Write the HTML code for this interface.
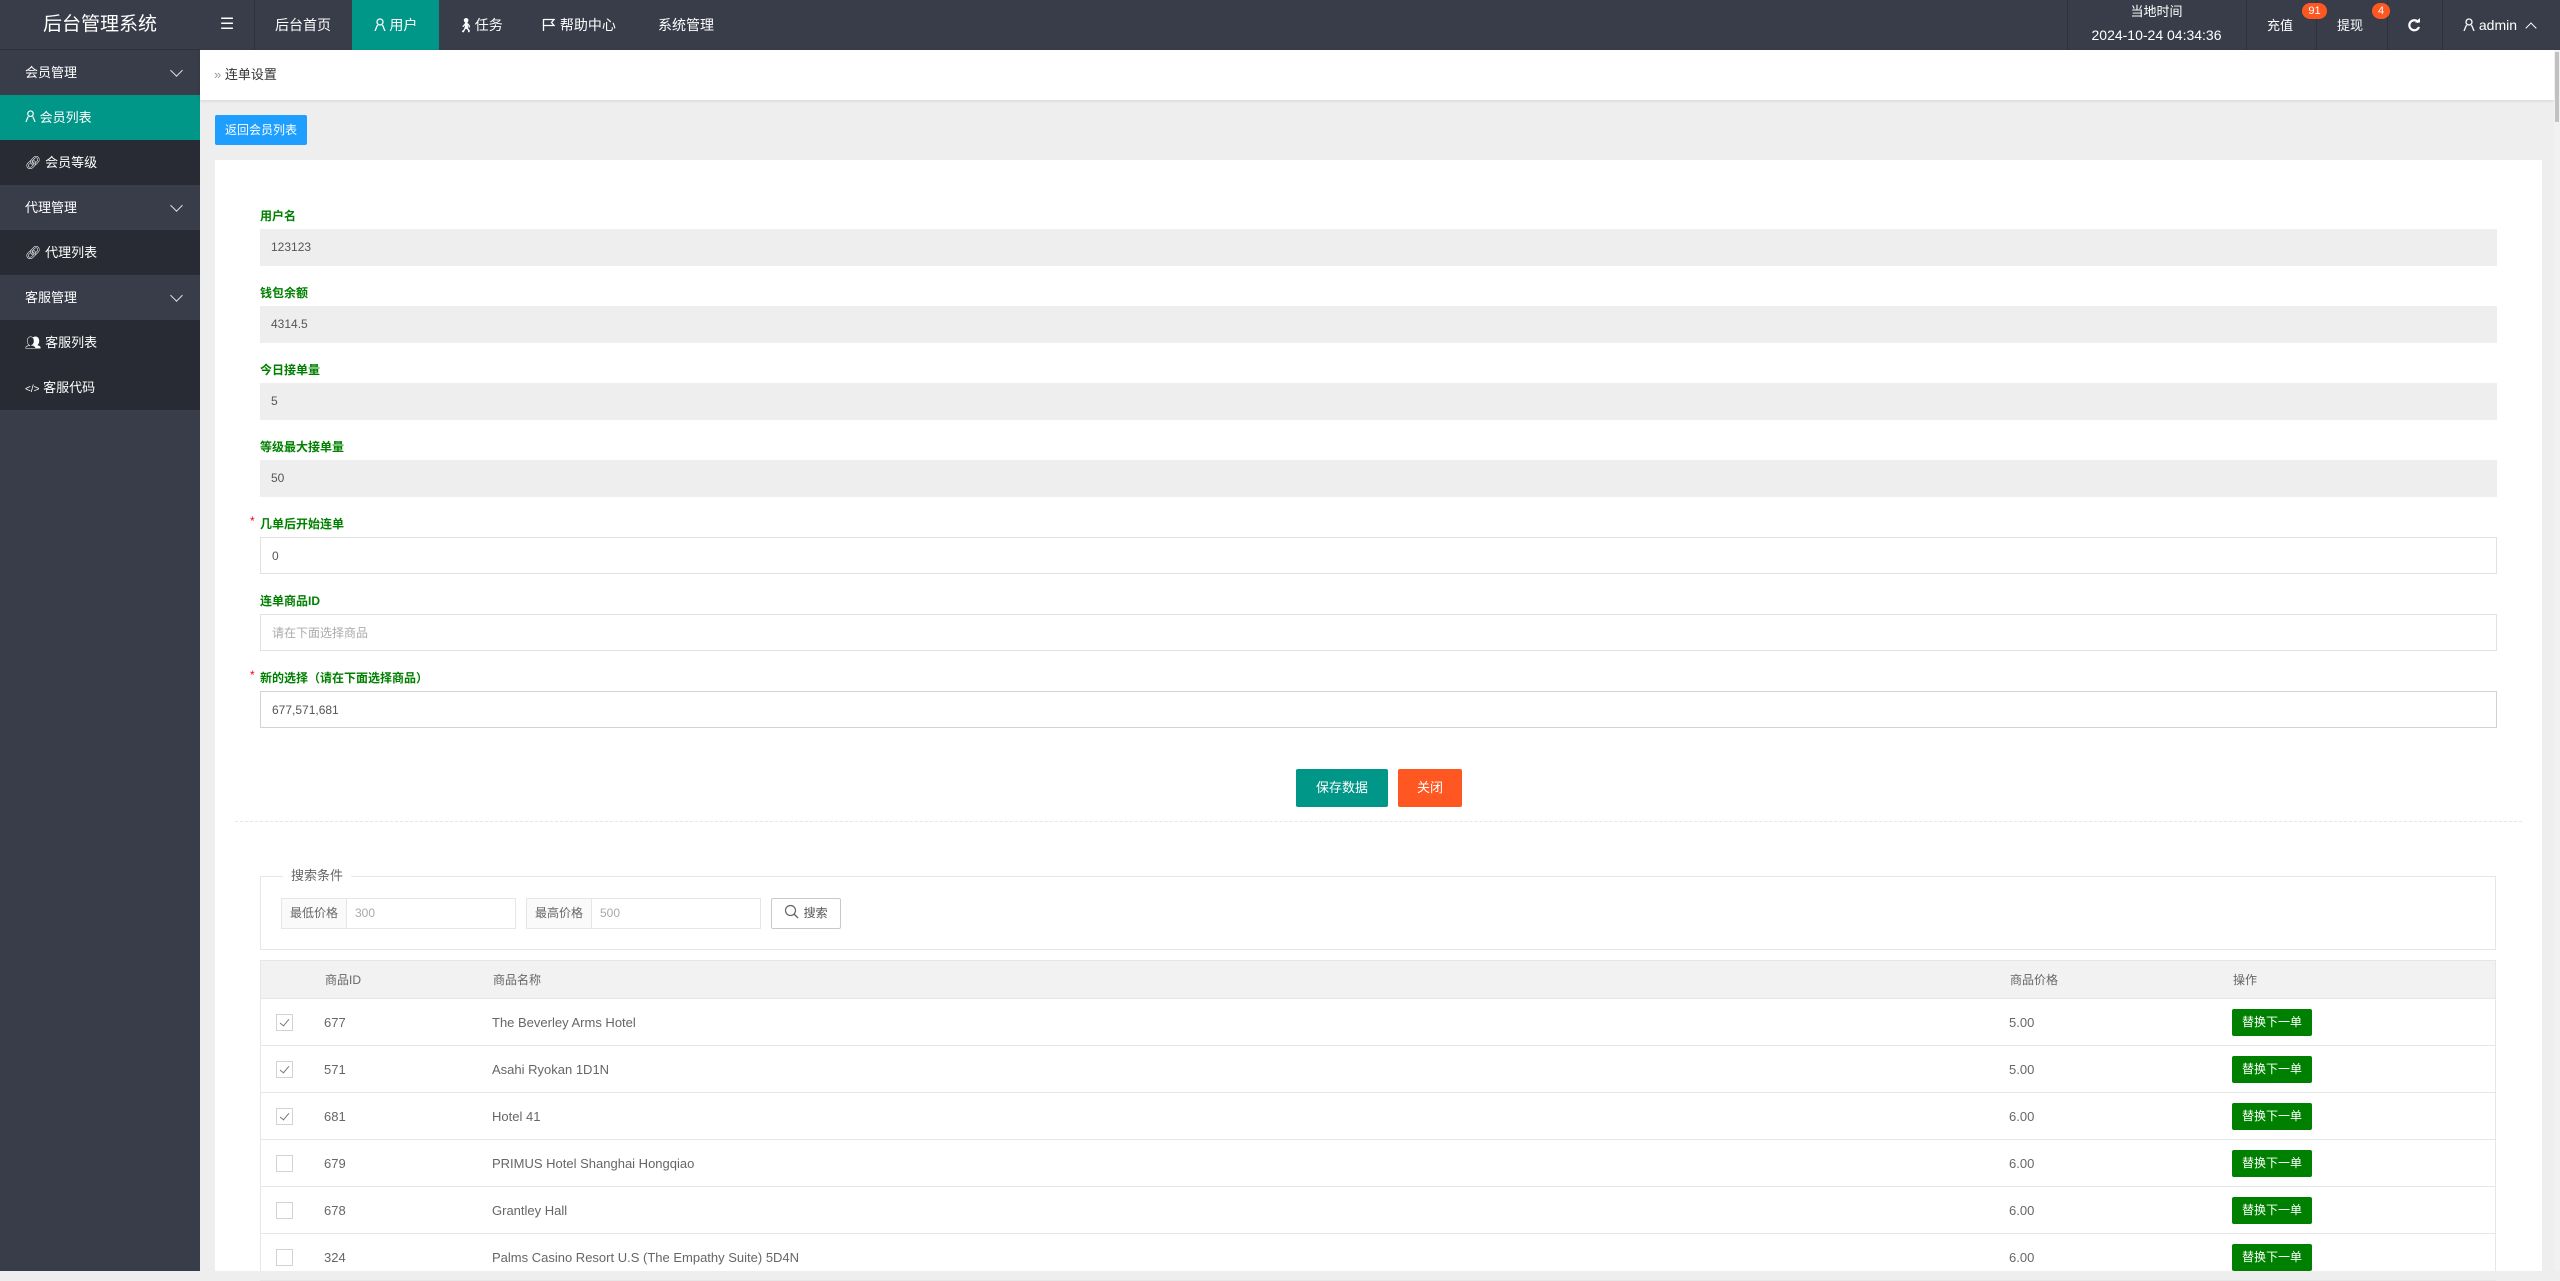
<!DOCTYPE html>
<html><head><meta charset="utf-8"><style>
*{margin:0;padding:0;box-sizing:border-box}
body{width:2560px;height:1271px;overflow:hidden;background:#eeeeee;font-family:"Liberation Sans","Noto Sans CJK SC",sans-serif;position:relative}
.a{position:absolute}
.hdr{left:0;top:0;width:2560px;height:50px;background:#393D49;color:#fff}
.nav{top:0;height:50px;line-height:50px;font-size:14px;color:#fff}
.side{left:0;top:50px;width:200px;height:1221px;background:#393D49}
.si{position:absolute;left:0;width:200px;height:45px;line-height:45px;color:#fff;font-size:13px;padding-left:25px}
.grp{background:#393D49}
.sub{background:#282B33}
.chev{position:absolute;left:172px;top:16px;width:9px;height:9px;border-right:1.5px solid #ddd;border-bottom:1.5px solid #ddd;transform:rotate(45deg)}
.lbl{position:absolute;left:260px;font-size:12px;font-weight:bold;color:#008000;line-height:14px}
.inp{position:absolute;left:260px;width:2237px;height:37px;line-height:37px;font-size:12px;color:#555;padding-left:11px}
.ro{background:#eeeeee}
.wt{background:#fff;border:1px solid #e2e2e2}
.star{position:absolute;left:250px;color:#f00;font-size:12px;line-height:12px}
.row{position:absolute;left:260px;width:2236px;height:47px;border-bottom:1px solid #e6e6e6;font-size:13px;color:#666;line-height:47px}
.cb{position:absolute;left:16px;top:15px;width:17px;height:17px;border:1px solid #d2d2d2;background:#fff}
.cb.on::after{content:"";position:absolute;left:5px;top:2px;width:4px;height:8px;border-right:1px solid #777;border-bottom:1px solid #777;transform:rotate(40deg)}
.btn{position:absolute;left:1972px;top:10px;width:80px;height:27px;background:#008000;color:#fff;font-size:12px;line-height:27px;text-align:center;border-radius:2px}
.dv{position:absolute;top:0;width:1px;height:50px;background:#2f323c}
</style></head><body>
<div class="a hdr"></div>
<div class="a" style="left:0;top:0;width:200px;height:50px;line-height:50px;text-align:center;color:#fff;font-size:19px;border-bottom:1px solid #2f323c">后台管理系统</div>
<div class="a nav" style="left:200px;width:55px;text-align:center;font-size:16px;border-right:1px solid #2f323c">☰</div>
<div class="a nav" style="left:275px">后台首页</div>
<div class="a nav" style="left:352px;width:87px;background:#009688;text-align:center"><svg width="12" height="13" viewBox="0 0 12 13" style="vertical-align:-1px"><circle cx="6" cy="4" r="3" fill="none" stroke="#fff" stroke-width="1.3"/><path d="M1 13 L3.5 7 M11 13 L8.5 7" stroke="#fff" stroke-width="1.3"/></svg> 用户</div>
<div class="a nav" style="left:457px">🚶︎任务</div>
<div class="a nav" style="left:542px"><svg width="14" height="13" viewBox="0 0 14 13" style="vertical-align:-1px"><path d="M1.5 1V13 M1.5 1.5H12L9.5 4.5 12 7.5H1.5" fill="none" stroke="#fff" stroke-width="1.3"/></svg> 帮助中心</div>
<div class="a nav" style="left:658px">系统管理</div>
<div class="dv" style="left:2067px"></div><div class="dv" style="left:2246px"></div><div class="dv" style="left:2316px"></div><div class="dv" style="left:2387px"></div><div class="dv" style="left:2442px"></div>
<div class="a" style="left:2067px;top:3px;width:179px;text-align:center;color:#fff;font-size:13px;line-height:18px">当地时间</div>
<div class="a" style="left:2067px;top:25px;width:179px;text-align:center;color:#fff;font-size:14px;line-height:20px">2024-10-24 04:34:36</div>
<div class="a nav" style="left:2267px;font-size:13px;top:1px">充值</div>
<div class="a" style="left:2302px;top:3px;width:25px;height:16px;border-radius:8px;background:#FF5722;color:#fff;font-size:11px;line-height:16px;text-align:center">91</div>
<div class="a nav" style="left:2337px;font-size:13px;top:1px">提现</div>
<div class="a" style="left:2372px;top:3px;width:18px;height:16px;border-radius:8px;background:#FF5722;color:#fff;font-size:11px;line-height:16px;text-align:center">4</div>
<div class="a" style="left:2407px;top:18px"><svg width="14" height="14" viewBox="0 0 14 14"><path d="M11.5 4.5A5 5 0 1 0 12 9" fill="none" stroke="#fff" stroke-width="2.2"/><path d="M8 4.5H13V0Z" fill="#fff"/></svg></div>
<div class="a nav" style="left:2463px;font-size:14px"><svg width="12" height="13" viewBox="0 0 12 13" style="vertical-align:-1px"><circle cx="6" cy="4" r="3" fill="none" stroke="#fff" stroke-width="1.3"/><path d="M1 13 L3.5 7 M11 13 L8.5 7" stroke="#fff" stroke-width="1.3"/></svg> admin <span style="display:inline-block;width:8px;height:8px;border-left:1.5px solid #fff;border-top:1.5px solid #fff;transform:rotate(45deg);margin-left:6px;vertical-align:-2px"></span></div>

<div class="a side"></div>
<div class="si grp" style="top:50px">会员管理<i class="chev"></i></div>
<div class="si" style="top:95px;background:#009688"><svg width="11" height="12" viewBox="0 0 12 13"><circle cx="6" cy="4" r="3" fill="none" stroke="#fff" stroke-width="1.3"/><path d="M1 13 L3.5 7 M11 13 L8.5 7" stroke="#fff" stroke-width="1.3"/></svg> 会员列表</div>
<div class="si sub" style="top:140px">🔗︎ 会员等级</div>
<div class="si grp" style="top:185px">代理管理<i class="chev"></i></div>
<div class="si sub" style="top:230px">🔗︎ 代理列表</div>
<div class="si grp" style="top:275px">客服管理<i class="chev"></i></div>
<div class="si sub" style="top:320px">👥︎ 客服列表</div>
<div class="si sub" style="top:365px;font-size:13px"><span style="font-size:10px">&lt;/&gt;</span> 客服代码</div>

<div class="a" style="left:200px;top:50px;width:2354px;height:50px;background:#fff;box-shadow:0 1px 3px rgba(0,0,0,.1);line-height:50px;font-size:13px;color:#333;padding-left:14px"><span style="color:#999">»</span> 连单设置</div>
<div class="a" style="left:2554px;top:50px;width:6px;height:1221px;background:#f1f1f1"></div>
<div class="a" style="left:2555px;top:52px;width:4px;height:70px;background:#c1c1c1"></div>
<div class="a" style="left:215px;top:115px;width:92px;height:30px;background:#1E9FFF;color:#fff;font-size:12px;line-height:30px;text-align:center;border-radius:2px">返回会员列表</div>
<div class="a" style="left:215px;top:160px;width:2327px;height:1111px;background:#fff"></div>

<div class="lbl" style="top:209px">用户名</div><div class="inp ro" style="top:229px">123123</div>
<div class="lbl" style="top:286px">钱包余额</div><div class="inp ro" style="top:306px">4314.5</div>
<div class="lbl" style="top:363px">今日接单量</div><div class="inp ro" style="top:383px">5</div>
<div class="lbl" style="top:440px">等级最大接单量</div><div class="inp ro" style="top:460px">50</div>
<div class="star" style="top:515px">*</div><div class="lbl" style="top:517px">几单后开始连单</div><div class="inp wt" style="top:537px">0</div>
<div class="lbl" style="top:594px">连单商品ID</div><div class="inp wt" style="top:614px;color:#aaa">请在下面选择商品</div>
<div class="star" style="top:669px">*</div><div class="lbl" style="top:671px">新的选择（请在下面选择商品）</div><div class="inp wt" style="top:691px;border-color:#d2d2d2">677,571,681</div>

<div class="a" style="left:1296px;top:769px;width:92px;height:38px;background:#009688;color:#fff;font-size:13px;line-height:38px;text-align:center;border-radius:2px">保存数据</div>
<div class="a" style="left:1398px;top:769px;width:64px;height:38px;background:#FF5722;color:#fff;font-size:13px;line-height:38px;text-align:center;border-radius:2px">关闭</div>
<div class="a" style="left:235px;top:821px;width:2287px;border-top:1px dashed #e6e6e6"></div>

<div class="a" style="left:260px;top:876px;width:2236px;height:74px;border:1px solid #e6e6e6"></div>
<div class="a" style="left:283px;top:867px;padding:0 8px;background:#fff;font-size:13px;color:#666;line-height:18px">搜索条件</div>
<div class="a" style="left:281px;top:898px;width:235px;height:31px;border:1px solid #e6e6e6;font-size:12px;line-height:29px"><span style="display:inline-block;width:65px;height:29px;background:#fafafa;border-right:1px solid #e6e6e6;color:#666;text-align:center">最低价格</span><span style="color:#aaa;padding-left:8px">300</span></div>
<div class="a" style="left:526px;top:898px;width:235px;height:31px;border:1px solid #e6e6e6;font-size:12px;line-height:29px"><span style="display:inline-block;width:65px;height:29px;background:#fafafa;border-right:1px solid #e6e6e6;color:#666;text-align:center">最高价格</span><span style="color:#aaa;padding-left:8px">500</span></div>
<div class="a" style="left:771px;top:898px;width:70px;height:31px;border:1px solid #c9c9c9;border-radius:2px;font-size:12px;line-height:29px;color:#555;text-align:center"><svg width="16" height="16" viewBox="0 0 16 16" style="vertical-align:-3px"><circle cx="6.5" cy="6.5" r="5" fill="none" stroke="#666" stroke-width="1.2"/><path d="M10 10L14 14" stroke="#666" stroke-width="1.3"/></svg> 搜索</div>

<div class="a" style="left:260px;top:960px;width:2236px;height:39px;background:#f2f2f2;border:1px solid #e6e6e6;font-size:12px;color:#666;line-height:39px">
<span class="a" style="left:64px">商品ID</span><span class="a" style="left:232px">商品名称</span><span class="a" style="left:1749px">商品价格</span><span class="a" style="left:1972px">操作</span></div>
<div class="a" style="left:260px;top:999px;width:1px;height:272px;background:#e6e6e6"></div>
<div class="a" style="left:2495px;top:999px;width:1px;height:272px;background:#e6e6e6"></div>

<div class="row" style="top:999px"><i class="cb on"></i><span class="a" style="left:64px">677</span><span class="a" style="left:232px">The Beverley Arms Hotel</span><span class="a" style="left:1749px">5.00</span><span class="btn">替换下一单</span></div>
<div class="row" style="top:1046px"><i class="cb on"></i><span class="a" style="left:64px">571</span><span class="a" style="left:232px">Asahi Ryokan 1D1N</span><span class="a" style="left:1749px">5.00</span><span class="btn">替换下一单</span></div>
<div class="row" style="top:1093px"><i class="cb on"></i><span class="a" style="left:64px">681</span><span class="a" style="left:232px">Hotel 41</span><span class="a" style="left:1749px">6.00</span><span class="btn">替换下一单</span></div>
<div class="row" style="top:1140px"><i class="cb"></i><span class="a" style="left:64px">679</span><span class="a" style="left:232px">PRIMUS Hotel Shanghai Hongqiao</span><span class="a" style="left:1749px">6.00</span><span class="btn">替换下一单</span></div>
<div class="row" style="top:1187px"><i class="cb"></i><span class="a" style="left:64px">678</span><span class="a" style="left:232px">Grantley Hall</span><span class="a" style="left:1749px">6.00</span><span class="btn">替换下一单</span></div>
<div class="row" style="top:1234px"><i class="cb"></i><span class="a" style="left:64px">324</span><span class="a" style="left:232px">Palms Casino Resort U.S (The Empathy Suite) 5D4N</span><span class="a" style="left:1749px">6.00</span><span class="btn">替换下一单</span></div>
</body></html>
